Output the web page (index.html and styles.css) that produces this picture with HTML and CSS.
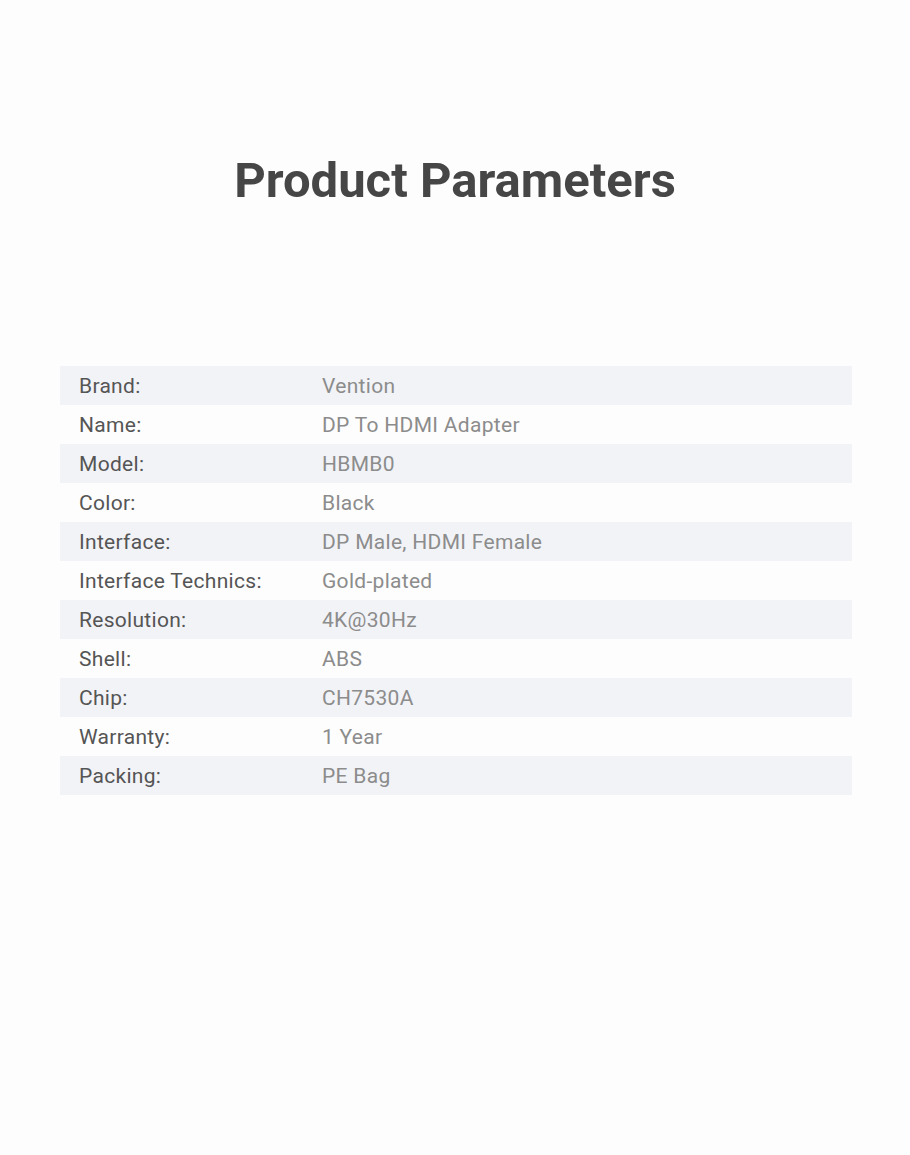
FILE: index.html
```html
<!DOCTYPE html>
<html>
<head>
<meta charset="utf-8">
<link rel="stylesheet" href="styles.css">
</head>
<body>
<div class="page">
  <h1 class="title">Product Parameters</h1>
  <div class="table">
    <div class="row"><span class="label">Brand:</span><span class="value">Vention</span></div>
    <div class="row"><span class="label">Name:</span><span class="value">DP To HDMI Adapter</span></div>
    <div class="row"><span class="label">Model:</span><span class="value">HBMB0</span></div>
    <div class="row"><span class="label">Color:</span><span class="value">Black</span></div>
    <div class="row"><span class="label">Interface:</span><span class="value">DP Male, HDMI Female</span></div>
    <div class="row"><span class="label">Interface Technics:</span><span class="value">Gold-plated</span></div>
    <div class="row"><span class="label">Resolution:</span><span class="value">4K@30Hz</span></div>
    <div class="row"><span class="label">Shell:</span><span class="value">ABS</span></div>
    <div class="row"><span class="label">Chip:</span><span class="value">CH7530A</span></div>
    <div class="row"><span class="label">Warranty:</span><span class="value">1 Year</span></div>
    <div class="row"><span class="label">Packing:</span><span class="value">PE Bag</span></div>
  </div>
</div>
</body>
</html>
```
FILE: styles.css
```css
html, body {
  margin: 0;
  padding: 0;
  background: #fdfdfd;
}
.page {
  width: 910px;
  height: 1155px;
  font-family: Roboto, "Liberation Sans", sans-serif;
  padding-top: 151px;
  box-sizing: border-box;
}
.title {
  margin: 0;
  text-align: center;
  font-weight: 700;
  font-size: 49px;
  line-height: 60px;
  color: #464646;
  letter-spacing: 0;
}
.table {
  margin: 155px 58px 0 60px;
}
.row {
  display: flex;
  align-items: center;
  height: 39px;
  font-size: 21px;
  letter-spacing: 0.3px;
}
.row:nth-child(odd) {
  background: #f2f3f7;
}
.label {
  width: 243px;
  padding-left: 19px;
  color: #555555;
}
.value {
  color: #8c8c8c;
}
```
